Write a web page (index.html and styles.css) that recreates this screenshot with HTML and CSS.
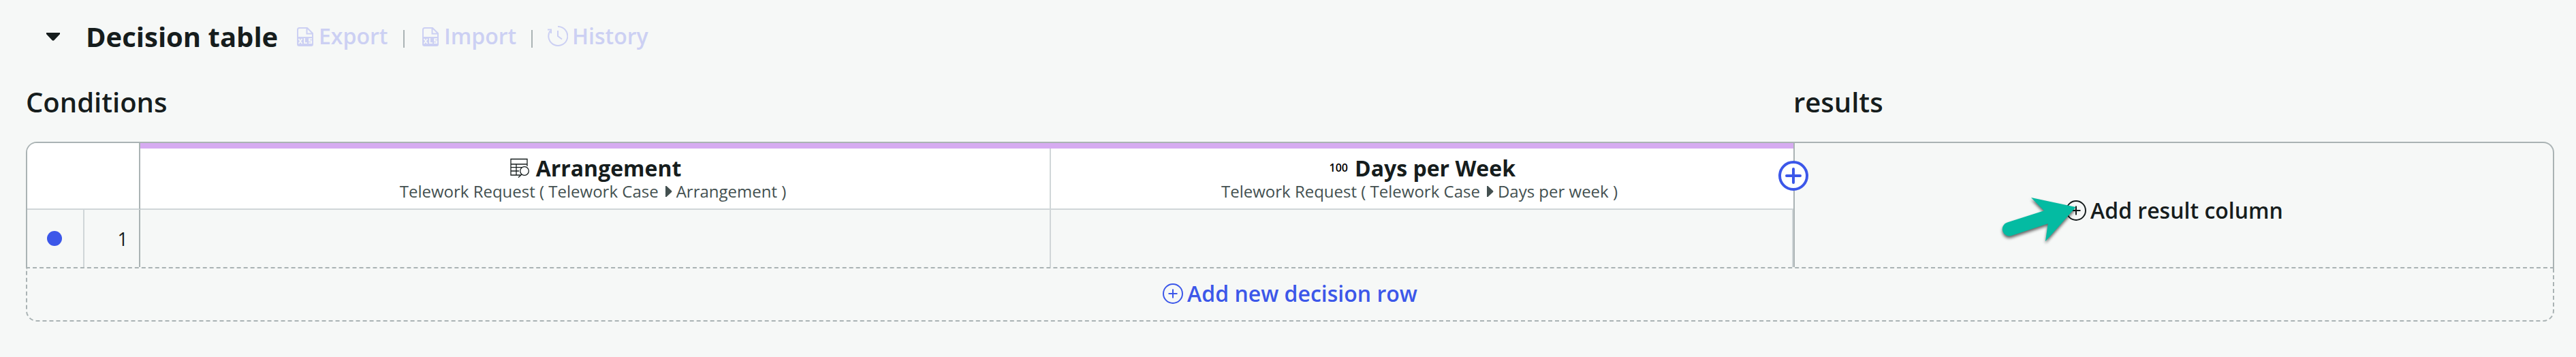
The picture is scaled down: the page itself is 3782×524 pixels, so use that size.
FILE: index.html
```html
<!DOCTYPE html>
<html lang="en">
<head>
<meta charset="utf-8">
<title>Decision table</title>
<link rel="stylesheet" href="styles.css">
</head>
<body>
<header class="toolbar">
  <svg class="caret" width="20" height="12" viewBox="0 0 20 12"><path d="M0 0H20V2L11.5 11Q10 12.6 8.5 11L0 2Z" fill="#161d1d"/></svg>
  <h1 class="title">Decision table</h1>
  <nav class="actions">
    <a class="action export"><svg class="xls" width="24" height="28" viewBox="0 0 24 28"><path d="M1 15V3.500Q1 1 3.500 1H15L23 9V15M14.500 1V9.500H23" fill="none" stroke="currentColor" stroke-width="2"/><path d="M0 14H24V25Q24 28 21 28H3Q0 28 0 25Z" fill="currentColor"/><path d="M2.500 17L7.500 24M7.500 17L2.500 24M11 16V23.200H15M22 17.200H18V20.200H21.200V23.200H17" fill="none" stroke="#f6f8f7" stroke-width="1.800"/></svg><span class="label">Export</span></a>
    <i class="sep"></i>
    <a class="action import"><svg class="xls" width="24" height="28" viewBox="0 0 24 28"><path d="M1 15V3.500Q1 1 3.500 1H15L23 9V15M14.500 1V9.500H23" fill="none" stroke="currentColor" stroke-width="2"/><path d="M0 14H24V25Q24 28 21 28H3Q0 28 0 25Z" fill="currentColor"/><path d="M2.500 17L7.500 24M7.500 17L2.500 24M11 16V23.200H15M22 17.200H18V20.200H21.200V23.200H17" fill="none" stroke="#f6f8f7" stroke-width="1.800"/></svg><span class="label">Import</span></a>
    <i class="sep"></i>
    <a class="action history"><svg width="30" height="30" viewBox="0 0 30 30"><path d="M15 1A14 14 0 1 1 3.500 7.500M0 5.500H5V11M15 7V15L21 19.500" fill="none" stroke="currentColor" stroke-width="2"/></svg><span class="label">History</span></a>
  </nav>
</header>
<div class="headings"><h2>Conditions</h2><h2>results</h2></div>
<main class="table">
  <section class="grid">
    <div class="corner"></div>
    <div class="col-head first">
      <div class="name"><svg class="field-icon" width="28" height="30" viewBox="0 0 28 30"><path d="M16 26H1V2.500H25V10H1M25 10V13M9 10V26M1 14.700H17M1 20H13" fill="none" stroke="#161d1d" stroke-width="1.300"/><circle cx="21" cy="20" r="6.300" fill="#fff" stroke="#161d1d" stroke-width="1.300"/><path d="M17 25L12 29.500" stroke="#161d1d" stroke-width="1.300"/></svg><span>Arrangement</span></div>
      <div class="path"><span>Telework Request ( Telework Case</span><svg width="10" height="16" viewBox="0 0 10 16"><path d="M0 0H1.500L9 7Q10 8 9 9L1.500 16H0Z" fill="#435050"/></svg><span>Arrangement )</span></div>
    </div>
    <div class="col-head second">
      <div class="name"><span class="number-icon">100</span><span>Days per Week</span></div>
      <div class="path"><span>Telework Request ( Telework Case</span><svg width="10" height="16" viewBox="0 0 10 16"><path d="M0 0H1.500L9 7Q10 8 9 9L1.500 16H0Z" fill="#435050"/></svg><span>Days per week )</span></div>
      <svg class="add-column" width="44" height="44" viewBox="0 0 44 44"><circle cx="22" cy="22" r="20" fill="#fff" stroke="#3c57e9" stroke-width="4"/><path d="M12 22H32M22 12V32" stroke="#3c57e9" stroke-width="4" stroke-linecap="round"/></svg>
    </div>
    <div class="result">
      <button class="add dark"><svg width="30" height="30" viewBox="0 0 30 30"><path d="M15 1A14 14 0 1 1 15 29A14 14 0 1 1 15 1ZM8.500 15H21.500M15 8.500V21.500" fill="none" stroke="currentColor" stroke-width="2"/></svg><span>Add result column</span></button>
      <svg class="pointer" width="130" height="90" viewBox="0 0 130 90"><path d="M108.700 24L43 10L62 29.300L8 46.500A10 10 0 0 0 14 66L67.700 48.300L64 74.300Z" fill="#04bba2"/></svg>
    </div>
    <div class="status"><i class="dot"></i></div>
    <div class="index">1</div>
    <div class="cell"></div>
    <div class="cell last"></div>
  </section>
  <footer class="add-row"><button class="add"><svg width="30" height="30" viewBox="0 0 30 30"><path d="M15 1A14 14 0 1 1 15 29A14 14 0 1 1 15 1ZM8.500 15H21.500M15 8.500V21.500" fill="none" stroke="currentColor" stroke-width="2"/></svg><span>Add new decision row</span></button></footer>
</main>
</body>
</html>
```
FILE: styles.css
```css
* { box-sizing: border-box; }
html { background: #f6f8f7; }
body { margin: 0; height: 524px; overflow: hidden; background: #f6f8f7; color: #161d1d; font-family: "Open Sans", "Noto Sans", sans-serif; }
h1, h2 { margin: 0; }
svg { display: block; flex: none; }
.toolbar { display: flex; align-items: center; height: 108px; padding-left: 68px; }
.title { width: 282px; margin-left: 38px; font: 700 40px/54px "Open Sans", sans-serif; white-space: nowrap; }
.actions { display: flex; align-items: center; margin-left: 28px; color: #ccd0f3; }
.action { display: flex; align-items: center; gap: 8px; font-size: 32px; font-weight: 600; line-height: 44px; }
.export { width: 134px; }
.import { width: 138px; }
.label { margin-top: -2px; }
.history { gap: 6px; margin-left: -4px; }
.history svg { margin-top: -2px; }
.sep { width: 2px; height: 26px; margin: 6px 26px 0 22px; background: #aab3b4; }
.headings { display: grid; grid-template-columns: 2595px 1fr; height: 100px; padding: 15px 0 0 38px; }
.headings h2 { font: 600 40px/54px "Open Sans", sans-serif; }
.table { width: 3712px; margin-left: 38px; }
.grid { display: grid; grid-template-columns: 84px 82px 1337px 1090px 1fr; grid-template-rows: 98px 84px; border: 2px solid #aab3b4; border-bottom: 0; border-radius: 16px 16px 0 0; }
.corner { grid-column: span 2; background: #fff; border-right: 2px solid #aab3b4; border-bottom: 2px solid #d0d6d8; border-top-left-radius: 14px; }
.col-head { position: relative; background: #fff; border-top: 8px solid #d6abf1; border-bottom: 2px solid #d0d6d8; display: flex; flex-direction: column; align-items: center; padding-top: 6px; }
.first { box-shadow: inset -2px 0 #d0d6d8; }
.name { display: flex; align-items: center; gap: 10px; height: 44px; font-size: 32px; font-weight: 700; }
.path { display: flex; align-items: center; gap: 6px; margin-top: -2px; padding-right: 8px; color: #435050; font-size: 24px; line-height: 30px; }
.path svg { margin-left: 4px; }
.number-icon { width: 28px; color: #000; font-size: 16px; font-weight: 600; text-align: right; }
.add-column { position: absolute; right: -22px; top: 18px; z-index: 2; }
.result { position: relative; grid-row: span 2; grid-column: 5; display: flex; align-items: center; justify-content: center; border-left: 2px solid #aab3b4; padding: 16px 0 0 2px; }
.add { display: flex; align-items: center; gap: 6px; padding: 0; border: 0; background: none; color: #3c57e9; font: 600 32px/44px "Open Sans", sans-serif; }
.add span { margin-top: -1px; }
.dark { color: #161d1d; }
.pointer { position: absolute; left: 304px; top: 70px; filter: drop-shadow(0 3px 2px rgba(0,0,0,.6)); }
.status { display: flex; align-items: center; justify-content: center; padding-right: 2px; border-right: 2px solid #d0d6d8; }
.dot { width: 22px; height: 22px; border-radius: 50%; background: #3c57e9; }
.index { display: flex; align-items: center; justify-content: flex-end; padding-right: 16px; border-right: 2px solid #aab3b4; font-size: 27px; }
.cell { border-right: 2px solid #d0d6d8; }
.add-row { height: 80px; display: flex; align-items: center; justify-content: center; padding-bottom: 2px; border: 2px dashed #aab3b4; border-radius: 0 0 16px 16px; }
```
